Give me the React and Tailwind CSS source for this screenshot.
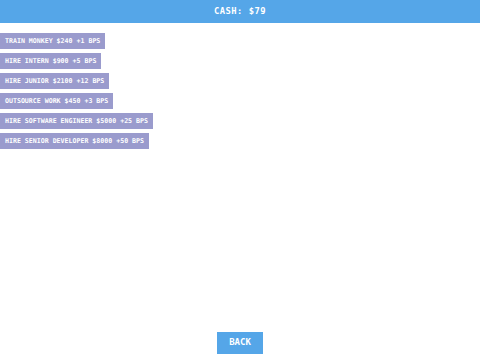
import React, { useState } from 'react';

const upgrades = [
    { name: "Train Monkey", cost: 240, bps: 1 },
    { name: "Hire Intern", cost: 900, bps: 5 },
    { name: "Hire Junior", cost: 2100, bps: 12 },
    { name: "Outsource Work", cost: 450, bps: 3 },
    { name: "Hire Software Engineer", cost: 5000, bps: 25 },
    { name: "Hire Senior Developer", cost: 8000, bps: 50 },
];

const App = () => {
    const [cash] = useState(79);

    return (
        <div className="h-screen flex flex-col bg-white text-white font-['DejaVu_Sans_Mono',monospace] uppercase">
            {/* Header */}
            <div className="h-[23px] bg-[#55a6e8] flex items-center justify-center text-[8.8px] font-bold tracking-[0.5px]">
                Cash: ${cash}
            </div>

            {/* Upgrade list */}
            <div className="flex flex-col items-start gap-[4px] mt-[10px]">
                {upgrades.map((u, i) => (
                    <button
                        key={i}
                        className="h-[16px] px-[5px] bg-[#9a9bcd] text-[6.6px] font-bold uppercase leading-none"
                    >
                        {u.name} ${u.cost} +{u.bps} BPS
                    </button>
                ))}
            </div>

            <div className="flex-1" />

            {/* Back */}
            <div className="flex justify-center mb-[6px]">
                <button className="w-[46px] h-[22px] bg-[#55a6e8] text-[9px] font-bold uppercase">
                    Back
                </button>
            </div>
        </div>
    );
};

export default App;
